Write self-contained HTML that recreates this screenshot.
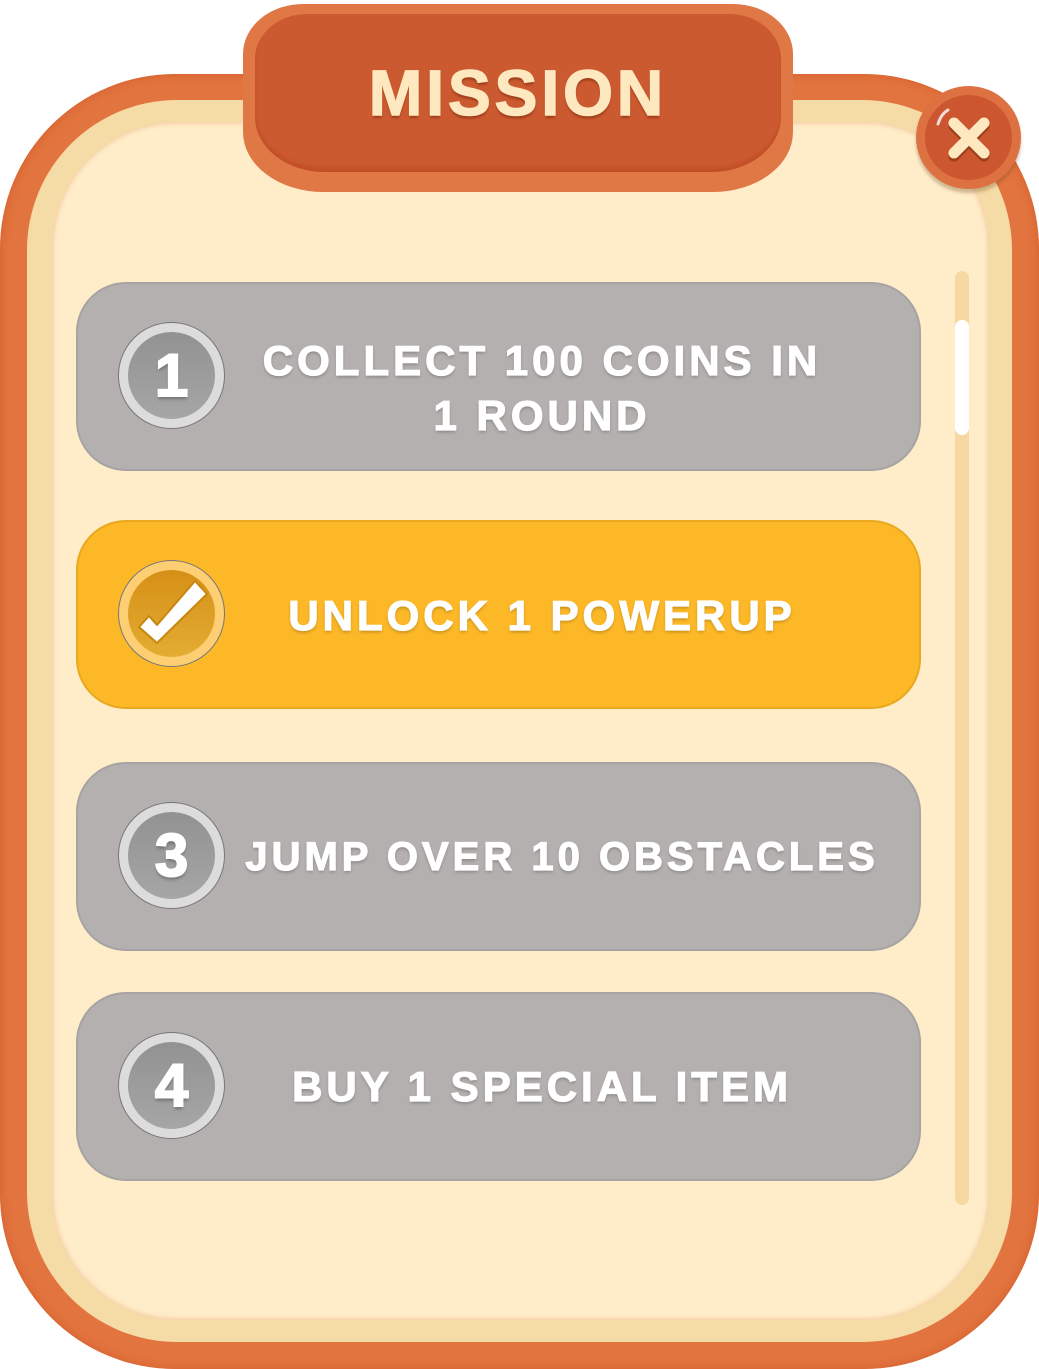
<!DOCTYPE html>
<html><head><meta charset="utf-8"><style>
html,body{margin:0;padding:0;background:#fff;}
body{width:1039px;height:1369px;position:relative;overflow:hidden;font-family:"Liberation Sans","DejaVu Sans",sans-serif;}
.abs{position:absolute;box-sizing:border-box;}
.outer{left:0;top:74px;width:1039px;height:1295px;border-radius:175px;background:#e2743f;box-shadow:inset 0 0 10px #d45e2c;}
.tan{left:27px;top:100px;width:985px;height:1242px;border-radius:150px;background:#f5dba6;}
.cream{left:52px;top:122px;width:937px;height:1198px;border-radius:125px;background:#feedc8;box-shadow:inset 0 0 6px #f1b890;}
.tab{left:243px;top:4px;width:550px;height:188px;border-radius:60px 60px 80px 80px/50px 50px 60px 60px;background:#e07846;}
.tabin{left:255px;top:14px;width:526px;height:158px;border-radius:52px 52px 70px 70px/45px 45px 55px 55px;background:#cc5a30;box-shadow:inset 0 -4px 4px #c24e26;}
.title{left:243px;top:56px;width:550px;text-align:center;font-size:64px;font-weight:bold;color:#fde8c0;letter-spacing:4px;-webkit-text-stroke:1.5px #fde8c0;text-shadow:0 3px 2px #9e3d1a;}
.close{left:916px;top:86px;width:105px;height:103px;border-radius:50%;background:#de7142;box-shadow:0 4px 3px rgba(120,80,40,.35);}
.closein{left:925px;top:95px;width:87px;height:85px;border-radius:50%;background:#cc5630;}
.card{left:76px;width:845px;height:189px;border-radius:50px;background:#b4b0af;border:2px solid #a7a3a2;}
.badge{width:107px;height:107px;border-radius:50%;background:#dcdcdc;border:1px solid #777;}
.badgein{left:9px;top:9px;width:87px;height:87px;border-radius:50%;background:linear-gradient(#929292,#a6a6a6);}
.num{left:0;top:0;width:105px;text-align:center;line-height:105px;font-size:60px;font-weight:bold;color:#fff;-webkit-text-stroke:2px #fff;text-shadow:0 3px 3px rgba(0,0,0,.3);}
.txt{width:760px;text-align:center;font-size:42px;font-weight:bold;color:#fff;letter-spacing:4px;line-height:55px;-webkit-text-stroke:1.2px #fff;text-shadow:0 2px 3px rgba(0,0,0,.25);}
</style></head><body>
<div class="abs outer"></div>
<div class="abs tan"></div>
<div class="abs cream"></div>
<div class="abs tab"></div>
<div class="abs tabin"></div>
<div class="abs title">MISSION</div>
<div class="abs close"></div>
<div class="abs closein"></div>
<svg class="abs" style="left:916px;top:86px" width="105" height="103" viewBox="0 0 105 103">
<path d="M38 37 L68 67 M68 37 L38 67" stroke="#9e3d1a" stroke-width="11" stroke-linecap="round" transform="translate(0,3)"/>
<path d="M38 37 L68 67 M68 37 L38 67" stroke="#fde8c0" stroke-width="11" stroke-linecap="round"/>
<path d="M22 38 Q25 28 32 24" stroke="#fff" stroke-width="3" fill="none" stroke-linecap="round" opacity=".8"/>
</svg>
<div class="abs" style="left:955px;top:271px;width:14px;height:934px;border-radius:7px;background:#f5d9a0;"></div>
<div class="abs" style="left:955px;top:320px;width:14px;height:115px;border-radius:7px;background:#fff;"></div>

<div class="abs card" style="top:282px"></div>
<div class="abs badge" style="left:118px;top:322px"><div class="abs badgein"></div><div class="abs num">1</div></div>
<div class="abs txt" style="left:162px;top:333px">COLLECT 100 COINS IN<br>1 ROUND</div>

<div class="abs card" style="top:520px;background:#fdb827;border-color:#e9a81e"></div>
<div class="abs badge" style="left:118px;top:560px;background:#fdce72"><div class="abs badgein" style="background:linear-gradient(#d68f17,#e3ad32)"></div>
<svg class="abs" style="left:0;top:0" width="107" height="107" viewBox="0 0 107 107"><path d="M20 66 L38 82 L88 33 L76 20 L38 64 L30 55 Z" fill="#fff" stroke="#c8860f" stroke-width="2" stroke-linejoin="round"/></svg></div>
<div class="abs txt" style="left:162px;top:588px">UNLOCK 1 POWERUP</div>

<div class="abs card" style="top:762px"></div>
<div class="abs badge" style="left:118px;top:802px"><div class="abs badgein"></div><div class="abs num">3</div></div>
<div class="abs txt" style="left:182px;top:830px;font-size:40px">JUMP OVER 10 OBSTACLES</div>

<div class="abs card" style="top:992px"></div>
<div class="abs badge" style="left:118px;top:1032px"><div class="abs badgein"></div><div class="abs num">4</div></div>
<div class="abs txt" style="left:162px;top:1059px">BUY 1 SPECIAL ITEM</div>
</body></html>
